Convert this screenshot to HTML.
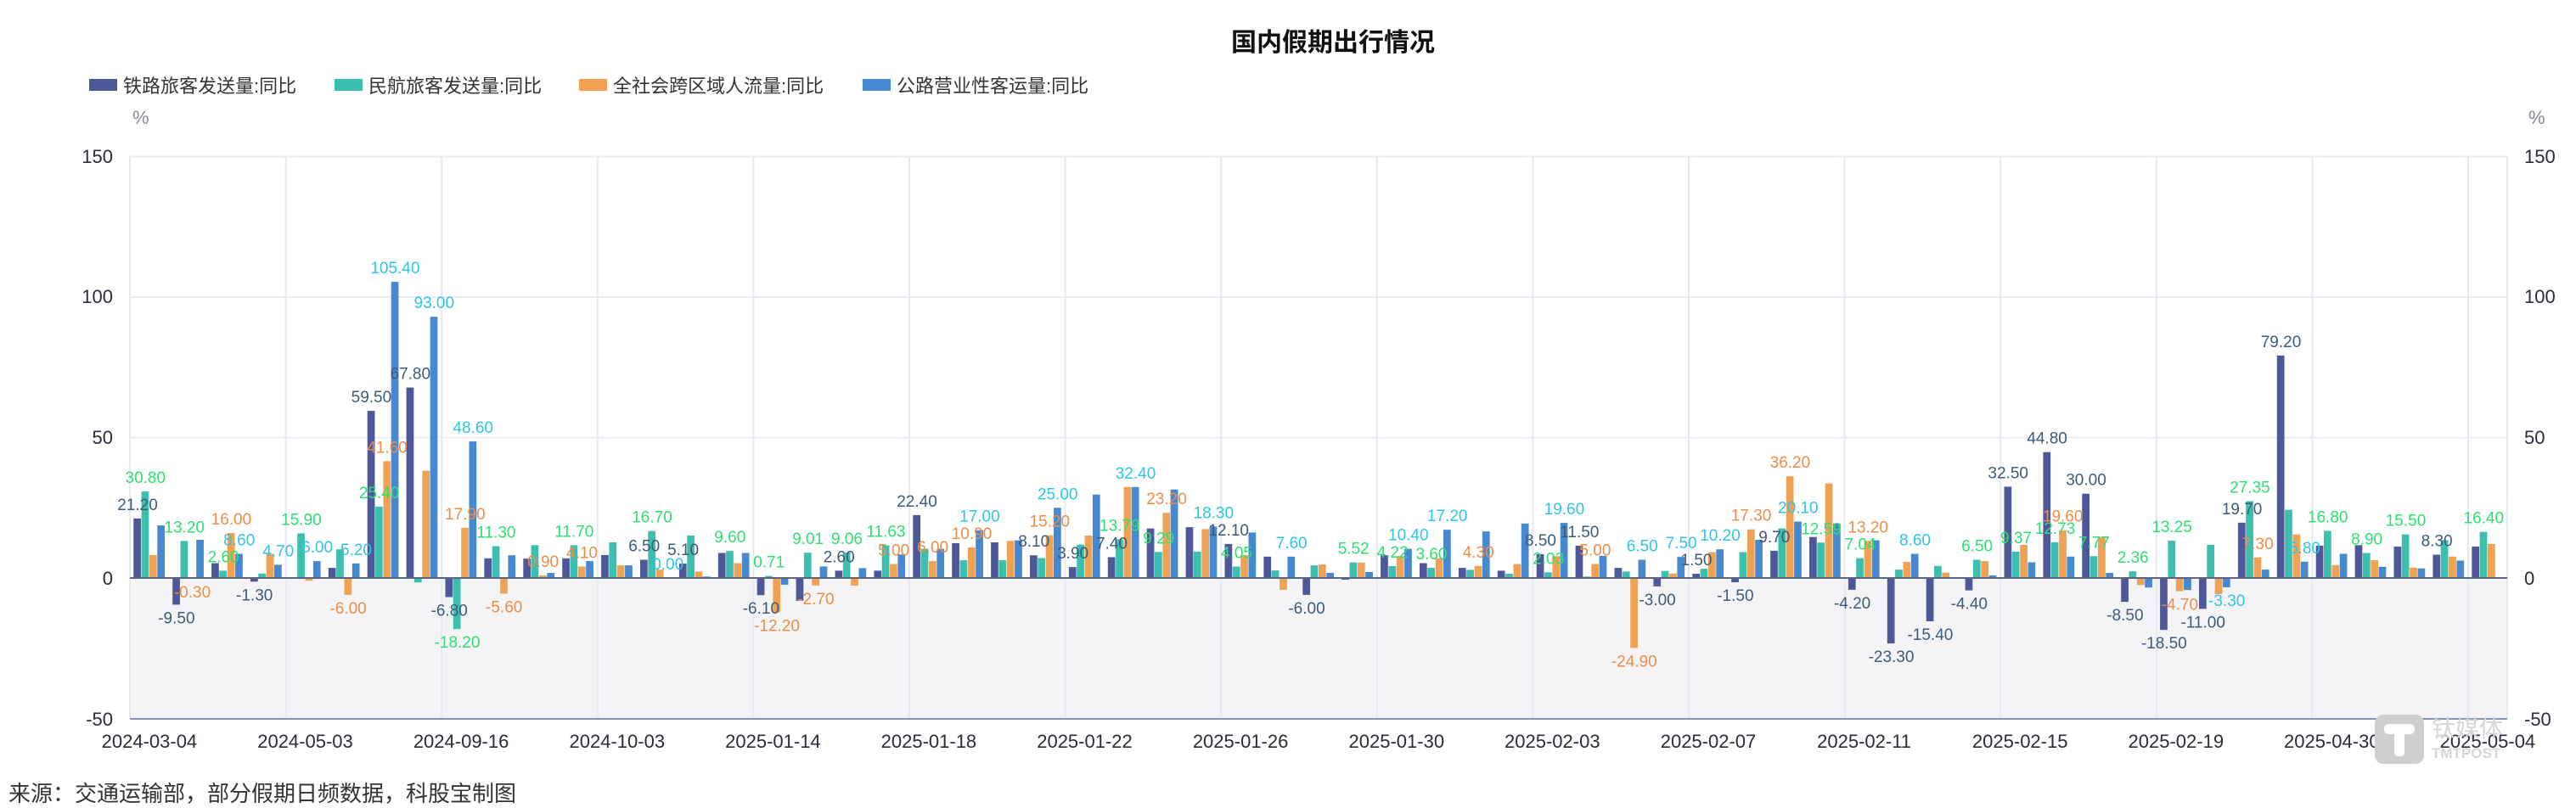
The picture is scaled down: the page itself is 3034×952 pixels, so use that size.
<!DOCTYPE html>
<html><head><meta charset="utf-8">
<style>
html,body{margin:0;padding:0;background:#fff;}
body{width:3034px;height:952px;overflow:hidden;position:relative;font-family:"Liberation Sans","Noto Sans CJK SC",sans-serif;}
svg{position:absolute;left:0;top:0;}
#lbl text{font-size:19px;text-anchor:middle;font-family:"Liberation Sans",sans-serif;}
.ax{font-size:22px;fill:#2b2b3a;font-family:"Liberation Sans",sans-serif;}
</style></head>
<body>
<svg id="s" width="3034" height="952" viewBox="0 0 3034 952" xmlns="http://www.w3.org/2000/svg">
<text x="1570" y="60" text-anchor="middle" font-size="30" font-weight="bold" fill="#111" font-family="Liberation Sans, Noto Sans CJK SC, sans-serif">国内假期出行情况</text>
<rect x="105" y="93" width="33" height="14" fill="#4e5899"/>
<text x="145" y="109" font-size="22" fill="#333" font-family="Liberation Sans, Noto Sans CJK SC, sans-serif">铁路旅客发送量:同比</text>
<rect x="394" y="93" width="33" height="14" fill="#3dbfb0"/>
<text x="434" y="109" font-size="22" fill="#333" font-family="Liberation Sans, Noto Sans CJK SC, sans-serif">民航旅客发送量:同比</text>
<rect x="682" y="93" width="33" height="14" fill="#f0a254"/>
<text x="722" y="109" font-size="22" fill="#333" font-family="Liberation Sans, Noto Sans CJK SC, sans-serif">全社会跨区域人流量:同比</text>
<rect x="1016" y="93" width="33" height="14" fill="#4789d1"/>
<text x="1056" y="109" font-size="22" fill="#333" font-family="Liberation Sans, Noto Sans CJK SC, sans-serif">公路营业性客运量:同比</text>
<text x="156" y="146" font-size="22" fill="#8a8a95" font-family="Liberation Sans, sans-serif">%</text>
<text x="2978" y="146" font-size="22" fill="#8a8a95" font-family="Liberation Sans, sans-serif">%</text>
<!-- negative region -->
<rect x="153" y="681" width="2800" height="166" fill="#f4f4f7"/>
<g id="grid"></g>
<text class="ax" x="133" y="192" text-anchor="end">150</text>
<text class="ax" x="133" y="357" text-anchor="end">100</text>
<text class="ax" x="133" y="523" text-anchor="end">50</text>
<text class="ax" x="133" y="689" text-anchor="end">0</text>
<text class="ax" x="133" y="855" text-anchor="end">-50</text>
<text class="ax" x="2973" y="192">150</text>
<text class="ax" x="2973" y="357">100</text>
<text class="ax" x="2973" y="523">50</text>
<text class="ax" x="2973" y="689">0</text>
<text class="ax" x="2973" y="855">-50</text>
<g id="xl">
<text class="ax" c="0">2024-03-04</text><text class="ax" c="4">2024-05-03</text><text class="ax" c="8">2024-09-16</text><text class="ax" c="12">2024-10-03</text>
<text class="ax" c="16">2025-01-14</text><text class="ax" c="20">2025-01-18</text><text class="ax" c="24">2025-01-22</text><text class="ax" c="28">2025-01-26</text>
<text class="ax" c="32">2025-01-30</text><text class="ax" c="36">2025-02-03</text><text class="ax" c="40">2025-02-07</text><text class="ax" c="44">2025-02-11</text>
<text class="ax" c="48">2025-02-15</text><text class="ax" c="52">2025-02-19</text><text class="ax" c="56">2025-04-30</text><text class="ax" c="60">2025-05-04</text>
</g>
<g id="bars"></g>
<line x1="153" y1="681" x2="2953" y2="681" stroke="#5b6380" stroke-width="2"/>
<line x1="153" y1="847" x2="2953" y2="847" stroke="#8891b0" stroke-width="2"/>
<g id="lbl">
<text c="0" s="0">21.20</text><text c="0" s="1">30.80</text>
<text c="1" s="0">-9.50</text><text c="1" s="1">13.20</text><text c="1" s="2">-0.30</text>
<text c="2" s="1">2.60</text><text c="2" s="2">16.00</text><text c="2" s="3">8.60</text>
<text c="3" s="0">-1.30</text><text c="3" s="3">4.70</text>
<text c="4" s="1">15.90</text><text c="4" s="3">6.00</text>
<text c="5" s="2">-6.00</text><text c="5" s="3">5.20</text>
<text c="6" s="0">59.50</text><text c="6" s="1">25.40</text><text c="6" s="2">41.60</text><text c="6" s="3">105.40</text>
<text c="7" s="0">67.80</text><text c="7" s="3">93.00</text>
<text c="8" s="0">-6.80</text><text c="8" s="1">-18.20</text><text c="8" s="2">17.90</text><text c="8" s="3">48.60</text>
<text c="9" s="1">11.30</text><text c="9" s="2">-5.60</text>
<text c="10" s="2">0.90</text>
<text c="11" s="1">11.70</text><text c="11" s="2">4.10</text>
<text c="13" s="0">6.50</text><text c="13" s="1">16.70</text><text c="13" s="3">0.00</text>
<text c="14" s="0">5.10</text>
<text c="15" s="1">9.60</text>
<text c="16" s="0">-6.10</text><text c="16" s="1">0.71</text><text c="16" s="2">-12.20</text>
<text c="17" s="1">9.01</text><text c="17" s="2">-2.70</text>
<text c="18" s="0">2.60</text><text c="18" s="1">9.06</text>
<text c="19" s="1">11.63</text><text c="19" s="2">5.00</text>
<text c="20" s="0">22.40</text><text c="20" s="2">6.00</text>
<text c="21" s="2">10.90</text><text c="21" s="3">17.00</text>
<text c="23" s="0">8.10</text><text c="23" s="2">15.20</text><text c="23" s="3">25.00</text>
<text c="24" s="0">3.90</text>
<text c="25" s="0">7.40</text><text c="25" s="1">13.79</text><text c="25" s="3">32.40</text>
<text c="26" s="1">9.29</text><text c="26" s="2">23.20</text>
<text c="27" s="3">18.30</text>
<text c="28" s="0">12.10</text><text c="28" s="1">4.05</text>
<text c="29" s="3">7.60</text>
<text c="30" s="0">-6.00</text>
<text c="31" s="1">5.52</text>
<text c="32" s="1">4.22</text><text c="32" s="3">10.40</text>
<text c="33" s="1">3.60</text><text c="33" s="3">17.20</text>
<text c="34" s="2">4.30</text>
<text c="36" s="0">8.50</text><text c="36" s="1">2.03</text><text c="36" s="3">19.60</text>
<text c="37" s="0">11.50</text><text c="37" s="2">5.00</text>
<text c="38" s="2">-24.90</text><text c="38" s="3">6.50</text>
<text c="39" s="0">-3.00</text><text c="39" s="3">7.50</text>
<text c="40" s="0">1.50</text><text c="40" s="3">10.20</text>
<text c="41" s="0">-1.50</text><text c="41" s="2">17.30</text>
<text c="42" s="0">9.70</text><text c="42" s="2">36.20</text><text c="42" s="3">20.10</text>
<text c="43" s="1">12.59</text>
<text c="44" s="0">-4.20</text><text c="44" s="1">7.04</text><text c="44" s="2">13.20</text>
<text c="45" s="0">-23.30</text><text c="45" s="3">8.60</text>
<text c="46" s="0">-15.40</text>
<text c="47" s="0">-4.40</text><text c="47" s="1">6.50</text>
<text c="48" s="0">32.50</text><text c="48" s="1">9.37</text>
<text c="49" s="0">44.80</text><text c="49" s="1">12.73</text><text c="49" s="2">19.60</text>
<text c="50" s="0">30.00</text><text c="50" s="1">7.77</text>
<text c="51" s="0">-8.50</text><text c="51" s="1">2.36</text>
<text c="52" s="0">-18.50</text><text c="52" s="1">13.25</text><text c="52" s="2">-4.70</text>
<text c="53" s="0">-11.00</text><text c="53" s="3">-3.30</text>
<text c="54" s="0">19.70</text><text c="54" s="1">27.35</text><text c="54" s="2">7.30</text>
<text c="55" s="0">79.20</text><text c="55" s="3">5.80</text>
<text c="56" s="1">16.80</text>
<text c="57" s="1">8.90</text>
<text c="58" s="1">15.50</text>
<text c="59" s="0">8.30</text>
<text c="60" s="1">16.40</text>
</g>
<!-- watermark -->
<rect x="2797" y="842" width="58" height="58" rx="10" fill="#cfcfcf"/>
<rect x="2808" y="853" width="36" height="12" rx="5" fill="#fff"/>
<rect x="2820" y="853" width="12" height="38" rx="4" fill="#fff"/>
<text x="2864" y="868" font-size="28" fill="#d6d6d6" font-family="Liberation Sans, Noto Sans CJK SC, sans-serif">钛媒体</text>
<text x="2864" y="893" font-size="17" font-weight="bold" fill="#d6d6d6" font-family="Liberation Sans, sans-serif">TMTPOST</text>
<text x="10" y="944" font-size="26" fill="#333" font-family="Liberation Sans, Noto Sans CJK SC, sans-serif">来源：交通运输部，部分假期日频数据，科股宝制图</text>
</svg>
<script>
(function(){
var D=[[21.2,30.8,8.2,18.7],[-9.5,13.2,-0.3,13.6],[5.3,2.6,16,8.6],[-1.3,1.6,8.6,4.7],[0.2,15.9,-1,6],[3.6,10.2,-6,5.2],[59.5,25.4,41.6,105.4],[67.8,-1.6,38.2,93],[-6.8,-18.2,17.9,48.6],[7,11.3,-5.6,8.1],
[6.9,11.7,0.9,1.8],[7,11.7,4.1,6],[8.2,12.7,4.5,4.5],[6.5,16.7,3,0],[5.1,15.1,2.3,0.5],[8.9,9.6,5.3,8.9],[-6.1,0.71,-12.2,-2.4],[-8.1,9.01,-2.7,4.1],[2.6,9.06,-2.7,3.5],[2.6,11.63,5,8.4],
[22.4,10.4,6,10.4],[12.4,6.3,10.9,17],[12.7,6.3,13.2,13.4],[8.1,7.1,15.2,25],[3.9,11.9,15.1,29.7],[7.4,13.79,32.4,32.4],[17.6,9.29,23.2,31.5],[18.1,9.4,17.4,18.3],[12.1,4.05,8.2,16.2],[7.6,2.7,-4.2,7.6],
[-6,4.5,4.8,1.8],[-0.6,5.52,5.5,2.1],[8.1,4.22,7.8,10.4],[5.3,3.6,7,17.2],[3.6,2.9,4.3,16.6],[2.6,1.5,5,19.4],[8.5,2.03,7.8,19.6],[11.5,0.5,5,7.9],[3.6,2.3,-24.9,6.5],[-3,2.5,1.6,7.5],
[1.5,3.3,9.2,10.2],[-1.5,9.2,17.3,13.6],[9.7,17.6,36.2,20.1],[14.6,12.59,33.7,19.4],[-4.2,7.04,13.2,13.4],[-23.3,3,5.7,8.6],[-15.4,4.3,1.9,0.3],[-4.4,6.5,6,0.9],[32.5,9.37,11.8,5.6],[44.8,12.73,17,7.6],
[30,7.77,14.6,1.8],[-8.5,2.36,-2.5,-3.4],[-18.5,13.25,-4.7,-4.3],[-11,11.8,-5.7,-3.3],[19.7,27.35,7.3,3],[79.2,24.3,15.5,5.8],[11.5,16.8,4.6,8.6],[11.7,8.9,6.3,4],[11.2,15.5,3.7,3.4],[8.3,13.5,7.6,6.2],
[11.2,16.4,12.1,0]];
var NS="http://www.w3.org/2000/svg",X0=153,W=45.9,Z=681,K=3.31,BW=9.33,OFF=4.3;
var COL=["#4e5899","#3dbfb0","#f0a254","#4789d1"],LC=["#3d5a78","#2ee070","#f08c46","#2ec6e8"];
function el(n,a,p){var e=document.createElementNS(NS,n);for(var k in a)e.setAttribute(k,a[k]);p.appendChild(e);return e;}
var g=document.getElementById("grid");
[184.5,350,515.5].forEach(function(y){el("line",{x1:X0,y1:y,x2:2953,y2:y,stroke:"#eaecf4","stroke-width":2},g);});
for(var k=0;k<=15;k++){var x=X0+k*W*4;el("line",{x1:x,y1:184,x2:x,y2:847,stroke:"#e6e9f2","stroke-width":2},g);}
el("line",{x1:2953,y1:184,x2:2953,y2:847,stroke:"#e6e9f2","stroke-width":2},g);
var b=document.getElementById("bars");
D.forEach(function(r,c){r.forEach(function(v,s){if(v===0)return;var x=X0+c*W+OFF+s*BW,h=Math.abs(v)*K;
el("rect",{x:x.toFixed(1),y:(v>0?Z-h:Z).toFixed(1),width:BW-0.6,height:h.toFixed(1),fill:COL[s]},b);});});
var xl=document.querySelectorAll("#xl text");
for(var i=0;i<xl.length;i++){var c=+xl[i].getAttribute("c");xl[i].setAttribute("x",(X0+(c+0.5)*W).toFixed(1));xl[i].setAttribute("y","881");xl[i].setAttribute("text-anchor","middle");}
var L=document.querySelectorAll("#lbl text");
for(var i=0;i<L.length;i++){var c=+L[i].getAttribute("c"),s=+L[i].getAttribute("s"),v=D[c][s];
var x=X0+c*W+OFF+s*BW+BW/2,y=v>=0?Z-v*K-10:Z-v*K+22;
L[i].setAttribute("x",x.toFixed(1));L[i].setAttribute("y",y.toFixed(1));L[i].setAttribute("fill",LC[s]);}
})();
</script>
</body></html>
